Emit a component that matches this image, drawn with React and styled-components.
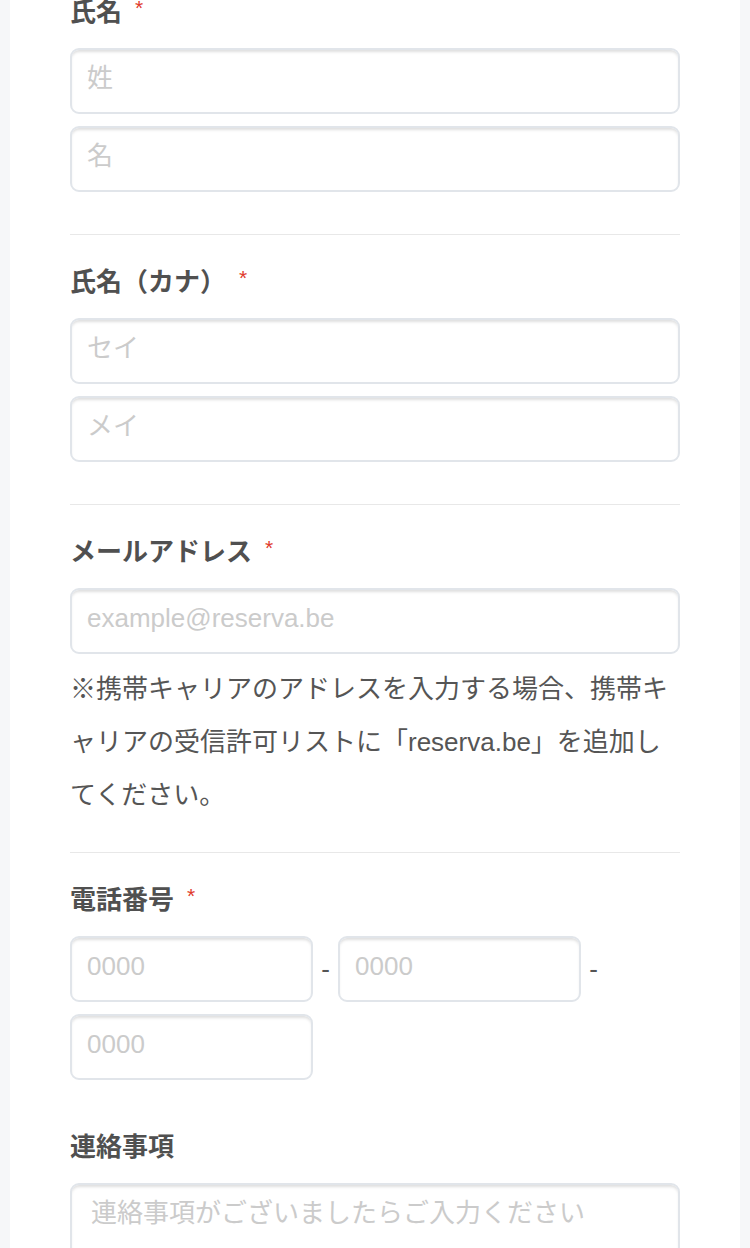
import React from "react";
import styled, { createGlobalStyle } from "styled-components";

const GlobalStyle = createGlobalStyle`
  html, body {
    margin: 0;
    padding: 0;
    background: #f6f7f9;
  }
  * {
    box-sizing: border-box;
  }
`;

const FONT = `"Liberation Sans", "Noto Sans CJK JP", sans-serif`;

const Page = styled.div`
  overflow: hidden;
  height: 1248px;
`;

const Card = styled.div`
  margin: -35px 10px 0;
  padding: 0 60px 200px;
  background: #fff;
  font-family: ${FONT};
  color: #555;
`;

const Section = styled.div`
  padding: 31px 0 ${({ $pb }) => $pb ?? 42}px;
  border-bottom: ${({ $noLine }) => ($noLine ? "none" : "1px solid #e8e8e8")};
`;

const Label = styled.div`
  display: flex;
  align-items: flex-start;
  height: 32px;
  line-height: 32px;
  font-size: 26px;
  font-weight: bold;
  color: #505050;
  margin-bottom: 20px;
`;

const Required = styled.span`
  margin-left: 13px;
  font-size: 21px;
  line-height: 24px;
  font-weight: normal;
  color: #e0392b;
`;

const Fields = styled.div`
  display: flex;
  flex-direction: column;
  gap: 12px;
`;

const Input = styled.input`
  display: block;
  width: ${({ $w }) => ($w ? `${$w}px` : "100%")};
  height: 66px;
  margin: 0;
  padding: 0 15px 6px;
  border: 2px solid #e1e5ea;
  border-radius: 9px;
  box-shadow: inset 0 3px 3px -1px rgba(0, 0, 0, 0.13);
  background: #fff;
  font-family: ${FONT};
  font-size: 26px;
  color: #555;
  outline: none;
  &::placeholder {
    color: #cbcbcb;
  }
`;

const TextArea = styled.textarea`
  display: block;
  width: 100%;
  height: 180px;
  margin: 0;
  padding: 8px 19px;
  border: 2px solid #e1e5ea;
  border-radius: 9px;
  box-shadow: inset 0 3px 3px -1px rgba(0, 0, 0, 0.13);
  font-family: ${FONT};
  font-size: 26px;
  line-height: 40px;
  resize: none;
  outline: none;
  &::placeholder {
    color: #cbcbcb;
  }
`;

const Note = styled.p`
  margin: 9px 0 0;
  font-size: 26px;
  line-height: 53px;
  color: #555;
`;

const PhoneRow = styled.div`
  display: flex;
  flex-wrap: wrap;
  row-gap: 12px;
`;

const PhoneGroup = styled.div`
  display: flex;
  align-items: center;
`;

const Dash = styled.span`
  width: 25px;
  text-align: center;
  font-size: 26px;
  color: #555;
`;

const phoneParts = [true, true, false];

export default function App() {
  return (
    <Page>
      <GlobalStyle />
      <Card>
        <Section>
          <Label>
            氏名<Required>*</Required>
          </Label>
          <Fields>
            <Input placeholder="姓" />
            <Input placeholder="名" />
          </Fields>
        </Section>

        <Section>
          <Label>
            氏名（カナ）<Required>*</Required>
          </Label>
          <Fields>
            <Input placeholder="セイ" />
            <Input placeholder="メイ" />
          </Fields>
        </Section>

        <Section $pb={30}>
          <Label>
            メールアドレス<Required>*</Required>
          </Label>
          <Input placeholder="example@reserva.be" />
          <Note>
            ※携帯キャリアのアドレスを入力する場合、携帯キャリアの受信許可リストに「reserva.be」を追加してください。
          </Note>
        </Section>

        <Section $noLine $pb={20}>
          <Label>
            電話番号<Required>*</Required>
          </Label>
          <PhoneRow>
            {phoneParts.map((hasDash, i) => (
              <PhoneGroup key={i}>
                <Input $w={243} placeholder="0000" />
                {hasDash && <Dash>-</Dash>}
              </PhoneGroup>
            ))}
          </PhoneRow>
        </Section>

        <Section $noLine>
          <Label>連絡事項</Label>
          <TextArea placeholder="連絡事項がございましたらご入力ください" />
        </Section>
      </Card>
    </Page>
  );
}
